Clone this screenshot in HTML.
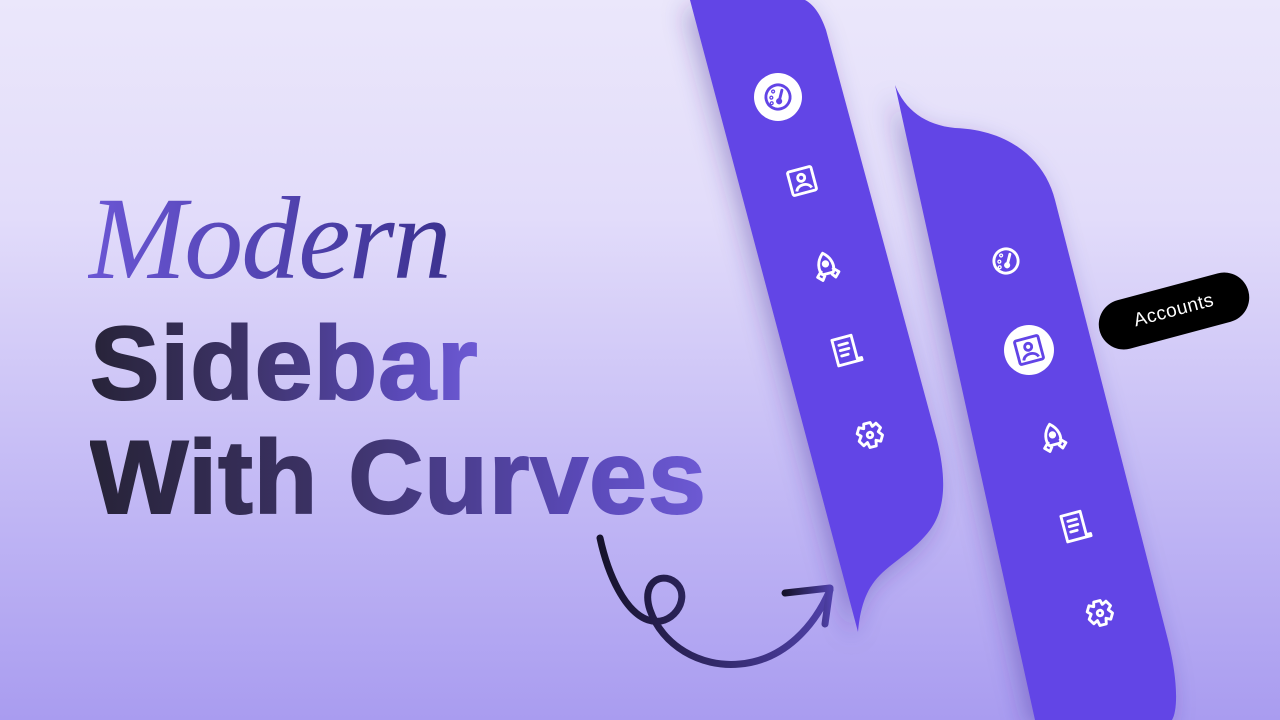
<!DOCTYPE html>
<html><head><meta charset="utf-8"><style>
html,body{margin:0;padding:0}
body{width:1280px;height:720px;overflow:hidden;position:relative;background:linear-gradient(180deg,#ebe7fb 0%,#e2dcfa 30%,#c9c0f6 60%,#a99cf0 100%);font-family:"Liberation Sans",sans-serif}
.t{position:absolute;left:90px;font-weight:bold;font-size:104px;letter-spacing:1px;line-height:1;background:linear-gradient(90deg,#272338 0%,#3d3368 40%,#5a49b8 80%,#6d5ad4 100%);-webkit-background-clip:text;background-clip:text;color:transparent;white-space:nowrap;-webkit-text-stroke:2px transparent}
.m{position:absolute;left:88px;top:180px;font-family:"Liberation Serif",serif;font-style:italic;font-size:118px;line-height:1;background:linear-gradient(90deg,#6a56d4,#3c3290);-webkit-background-clip:text;background-clip:text;color:transparent;letter-spacing:-2px}
.tip{position:absolute;left:1097px;top:286px;width:154px;height:50px;border-radius:25px;background:#000;color:#fff;font-size:19px;display:flex;align-items:center;justify-content:center;transform:rotate(-15deg);letter-spacing:.5px}
</style></head><body>
<div class="m">Modern</div>
<div class="t" style="top:312px">Sidebar</div>
<div class="t" style="top:426px">With Curves</div>
<svg width="1280" height="720" style="position:absolute;left:0;top:0">
<defs>
<filter id="sh" x="-30%" y="-10%" width="160%" height="120%"><feDropShadow dx="-6" dy="8" stdDeviation="12" flood-color="#3a2a90" flood-opacity=".35"/></filter>
<linearGradient id="ag" x1="0" x2="1"><stop offset="0" stop-color="#16122c"/><stop offset="1" stop-color="#4f40a8"/></linearGradient>
<g id="gauge" fill="none" stroke-width="2.6" stroke-linecap="round"><circle r="11"/><path d="M0,4 L5,-5"/><circle cx="0" cy="4" r="1.5"/><circle cx="-6" cy="-1" r=".6"/><circle cx="-3" cy="-6" r=".6"/><circle cx="-7" cy="4" r=".6"/></g>
<g id="port" fill="none" stroke-width="2.6" stroke-linejoin="round"><rect x="-11" y="-11" width="22" height="22" rx="1.5"/><circle cx="0" cy="-3" r="3.2"/><path d="M-7,8 C-5,2 5,2 7,8"/></g>
<g id="rock" fill="none" stroke-width="2.6" stroke-linejoin="round"><path d="M0,-12 C7,-6 8,2 5,7 L-5,7 C-8,2 -7,-6 0,-12Z M-5,3 L-10,8 L-6,12 L-3,8 M5,3 L10,8 L6,12 L3,8"/><circle cx="0" cy="-2" r="2" fill="#fff"/></g>
<g id="doc" fill="none" stroke-width="2.6" stroke-linejoin="round" stroke-linecap="round"><path d="M-11,-12 L7,-12 L7,10 L11,10 L11,12 L-11,12 Z M-6,-6 L2,-6 M-6,-1 L2,-1 M-6,4 L0,4"/></g>
<g id="gear" fill="none" stroke-width="2.6" stroke-linejoin="round"><path d="M-3,-11 L3,-11 L4,-7 L8,-9 L11,-4 L8,-1 L11,3 L8,8 L4,6 L3,11 L-3,11 L-4,6 L-8,8 L-11,3 L-8,-1 L-11,-4 L-8,-9 L-4,-7Z"/><circle r="2.5"/></g>
</defs>
<path filter="url(#sh)" fill="#6244e6" d="M690,0 L805,0 C815,5 822,18 826,30 L937,440 C947,480 945,510 930,530 C915,550 895,560 880,575 C865,590 860,610 858,632 Z"/>
<path filter="url(#sh)" fill="#6244e6" d="M895,85 C905,110 925,125 955,128 C1010,130 1045,160 1055,200 L1168,640 C1178,680 1178,710 1172,720 L1035,720 Z"/>
<circle cx="778" cy="97" r="24" fill="#fff"/>
<use href="#gauge" stroke="#6244e6" transform="translate(778,97) rotate(-15) scale(1.1)"/>
<use href="#port" stroke="#fff" transform="translate(802,181) rotate(-15) scale(1.1)"/>
<use href="#rock" stroke="#fff" transform="translate(826,266) rotate(-15) scale(1.1)"/>
<use href="#doc" stroke="#fff" transform="translate(847,350) rotate(-15) scale(1.1)"/>
<use href="#gear" stroke="#fff" transform="translate(870,435) rotate(-15) scale(1.1)"/>
<use href="#gauge" stroke="#fff" transform="translate(1006,261) rotate(-15) scale(1.1)"/>
<circle cx="1029" cy="350" r="25" fill="#fff"/>
<use href="#port" stroke="#6244e6" transform="translate(1029,350) rotate(-15) scale(1.1)"/>
<use href="#rock" stroke="#fff" transform="translate(1053,437) rotate(-15) scale(1.1)"/>
<use href="#doc" stroke="#fff" transform="translate(1076,526) rotate(-15) scale(1.1)"/>
<use href="#gear" stroke="#fff" transform="translate(1100,613) rotate(-15) scale(1.1)"/>
<g fill="none" stroke="url(#ag)" stroke-width="7" stroke-linecap="round" stroke-linejoin="round">
<path d="M600,538 C608,575 625,612 648,620 C672,628 690,600 678,585 C665,570 640,580 650,610 C662,645 700,668 740,664 C785,660 815,625 830,590"/>
<path d="M785,593 L830,588 L825,624"/>
</g>
</svg>
<div class="tip">Accounts</div>
</body></html>
